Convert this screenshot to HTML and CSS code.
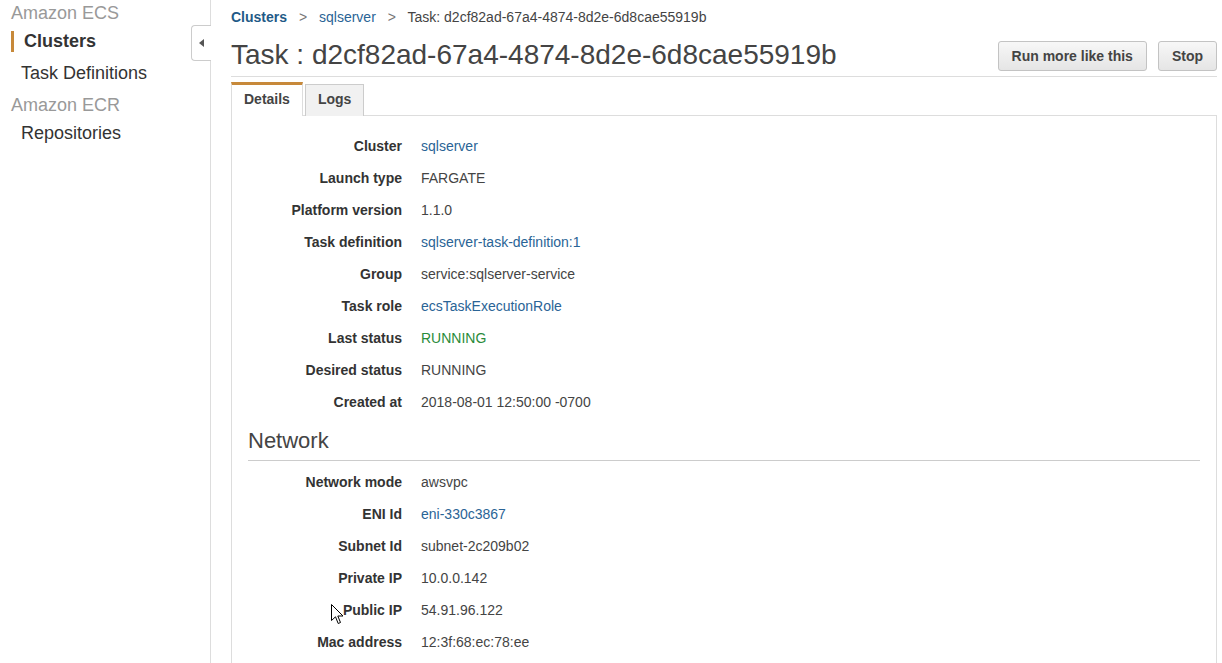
FILE: index.html
```html
<!DOCTYPE html>
<html><head><title>Task d2cf82ad-67a4-4874-8d2e-6d8cae55919b</title>
<link rel="stylesheet" href="styles.css">
</head>
<body>
<div id="page">
  <div id="sidebar">
    <div class="nav-group">Amazon ECS</div>
    <a class="nav-item active" href="#">Clusters</a>
    <a class="nav-item" href="#">Task Definitions</a>
    <div class="nav-group second">Amazon ECR</div>
    <a class="nav-item" href="#">Repositories</a>
    <div id="collapse"><svg width="6" height="8" viewBox="0 0 6 8"><path d="M5 0 L0 4 L5 8 Z" fill="#555"/></svg></div>
  </div>
  <div id="main">
    <div id="breadcrumb">
      <a class="crumb-root" href="#">Clusters</a>
      <span class="sep">&gt;</span>
      <a href="#">sqlserver</a>
      <span class="sep">&gt;</span>
      <span>Task: d2cf82ad-67a4-4874-8d2e-6d8cae55919b</span>
    </div>
    <div id="header">
      <h1>Task : d2cf82ad-67a4-4874-8d2e-6d8cae55919b</h1>
      <div class="actions">
        <button class="btn">Run more like this</button>
        <button class="btn">Stop</button>
      </div>
    </div>
    <div id="tabs">
      <div class="tab current">Details</div>
      <div class="tab">Logs</div>
    </div>
    <div id="panel">
      <div class="row"><div class="label">Cluster</div><div class="value"><a href="#">sqlserver</a></div></div>
      <div class="row"><div class="label">Launch type</div><div class="value">FARGATE</div></div>
      <div class="row"><div class="label">Platform version</div><div class="value">1.1.0</div></div>
      <div class="row"><div class="label">Task definition</div><div class="value"><a href="#">sqlserver-task-definition:1</a></div></div>
      <div class="row"><div class="label">Group</div><div class="value">service:sqlserver-service</div></div>
      <div class="row"><div class="label">Task role</div><div class="value"><a href="#">ecsTaskExecutionRole</a></div></div>
      <div class="row"><div class="label">Last status</div><div class="value status-ok">RUNNING</div></div>
      <div class="row"><div class="label">Desired status</div><div class="value">RUNNING</div></div>
      <div class="row"><div class="label">Created at</div><div class="value">2018-08-01 12:50:00 -0700</div></div>
      <h2>Network</h2>
      <div class="section">
        <div class="row"><div class="label">Network mode</div><div class="value">awsvpc</div></div>
        <div class="row"><div class="label">ENI Id</div><div class="value"><a href="#">eni-330c3867</a></div></div>
        <div class="row"><div class="label">Subnet Id</div><div class="value">subnet-2c209b02</div></div>
        <div class="row"><div class="label">Private IP</div><div class="value">10.0.0.142</div></div>
        <div class="row"><div class="label">Public IP</div><div class="value">54.91.96.122</div></div>
        <div class="row"><div class="label">Mac address</div><div class="value">12:3f:68:ec:78:ee</div></div>
      </div>
    </div>
  </div>
</div>
<svg id="cursor" width="13" height="21" viewBox="0 0 13 21"><path d="M0.5 0.5 L0.5 16.5 L4.5 12.8 L7.2 19.5 L9.5 18.5 L6.8 12 L12 12 Z" fill="#fff" stroke="#000" stroke-width="1"/></svg>
</body>
</html>
```

FILE: styles.css
```css
body {
    margin: 0;
    font-family: "Liberation Sans", Arial, sans-serif;
    font-size: 14px;
    color: #444;
    background: #fff;
    overflow: hidden;
}

a {
    color: #2a6496;
    text-decoration: none;
}

#page {
    display: flex;
    height: 663px;
    overflow: hidden;
}

#sidebar {
    position: relative;
    width: 210px;
    flex: none;
    border-right: 1px solid #ddd;
    display: flex;
    flex-direction: column;
    padding-top: 1px;
}

.nav-group {
    font-size: 18px;
    line-height: 24px;
    color: #999;
    padding-left: 11px;
}

.nav-group.second {
    margin-top: 4px;
}

.nav-item {
    font-size: 18px;
    line-height: 32px;
    color: #333;
    padding-left: 21px;
}

.nav-item.active {
    font-weight: bold;
    margin: 6px 0 5px 11px;
    padding-left: 10px;
    border-left: 3px solid #c7893a;
    line-height: 21px;
}

#collapse {
    position: absolute;
    top: 25px;
    right: -1px;
    width: 19px;
    height: 34px;
    background: #fff;
    border: 1px solid #ccc;
    border-right: none;
    border-radius: 4px 0 0 4px;
    display: flex;
    align-items: center;
    justify-content: center;
}

#main {
    flex: 1;
    padding: 7px 5px 0 20px;
    min-width: 0;
    overflow: hidden;
}

#breadcrumb {
    line-height: 20px;
    font-size: 14px;
    color: #444;
}

#breadcrumb a {
    color: #2a6496;
}

#breadcrumb .crumb-root {
    font-weight: bold;
    color: #1f5a87;
}

#breadcrumb .sep {
    color: #777;
    margin: 0 8px;
}

#header {
    display: flex;
    align-items: flex-end;
    justify-content: space-between;
    padding: 12px 0 5px;
    border-bottom: 1px solid #ddd;
}

h1 {
    margin: 0;
    font-size: 28px;
    font-weight: normal;
    line-height: 32px;
    color: #444;
}

.actions {
    display: flex;
    gap: 11px;
}

.btn {
    font-family: "Liberation Sans", Arial, sans-serif;
    font-size: 14px;
    font-weight: bold;
    color: #444;
    height: 30px;
    padding: 0 13px;
    border: 1px solid #c3c3c3;
    border-radius: 3px;
    background: linear-gradient(#f7f7f7, #e5e5e5);
}

#tabs {
    display: flex;
    align-items: flex-end;
    gap: 2px;
    margin-top: 5px;
    margin-bottom: -1px;
}

.tab {
    font-weight: bold;
    color: #444;
    padding: 0 12px;
    height: 31px;
    line-height: 28px;
    background: #f1f1f1;
    border: 1px solid #ccc;
    border-bottom: none;
}

.tab.current {
    background: #fff;
    border: 1px solid #ddd;
    border-top: 3px solid #c7893a;
    border-bottom: none;
    height: 31px;
    line-height: 28px;
    position: relative;
}

#panel {
    border: 1px solid #ddd;
    padding-top: 14px;
    height: 560px;
}

.row {
    display: flex;
    line-height: 32px;
    gap: 19px;
}

.label {
    width: 170px;
    text-align: right;
    font-weight: bold;
    color: #333;
}

.value {
    color: #444;
}

.status-ok {
    color: #2a8b3a;
}

h2 {
    margin: 9px 16px 0;
    font-size: 22px;
    font-weight: normal;
    line-height: 28px;
    color: #444;
    padding-bottom: 5px;
    border-bottom: 1px solid #ccc;
}

.section {
    padding-top: 5px;
}

#cursor {
    position: absolute;
    left: 331px;
    top: 604px;
}
```
